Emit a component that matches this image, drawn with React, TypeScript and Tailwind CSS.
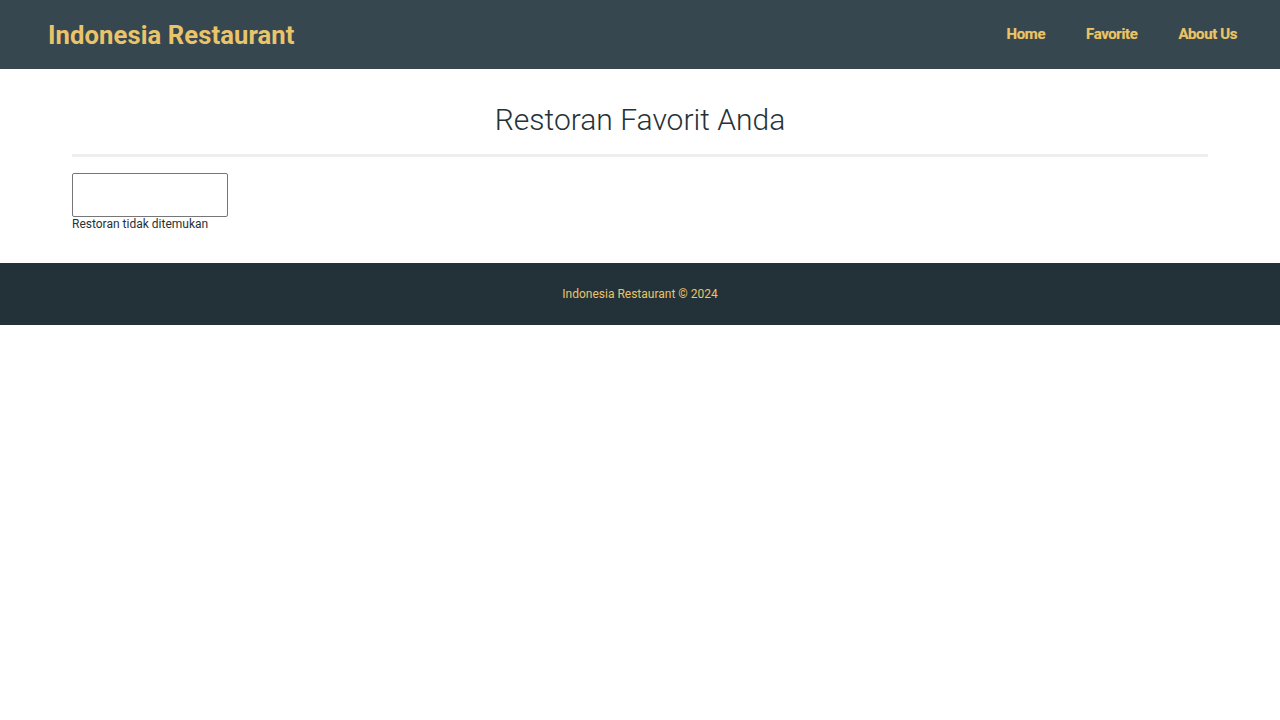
export default function App() {
  return (
    <div className="min-h-screen bg-white" style={{ fontFamily: "Roboto, 'Liberation Sans', sans-serif" }}>
      <header className="h-[69px] bg-[#37474f] flex items-center justify-between pl-12 pr-[43px]">
        <a className="text-[25.6px] font-bold text-[#e9c46a] tracking-[0.1px] pt-[2px]">Indonesia Restaurant</a>
        <nav className="flex items-center gap-[41px]">
          {["Home", "Favorite", "About Us"].map((t) => (
            <a key={t} className="text-[15px] font-bold text-[#e9c46a] tracking-[-0.4px] [text-shadow:0_0_1px_#8a7a40]">
              {t}
            </a>
          ))}
        </nav>
      </header>
      <main className="mx-[72px] pt-[33px] pb-[32px]">
        <h2 className="text-center text-[30px] font-light text-[#263238] leading-[36px]">Restoran Favorit Anda</h2>
        <div className="mt-[16px] h-[3px] bg-[#eeeeee]" />
        <div className="mt-[16px] w-[156px] h-[44px] border border-[#767676] rounded-[2px]" />
        <p className="text-[12px] text-[#263238] leading-[14px]">Restoran tidak ditemukan</p>
      </main>
      <footer className="h-[62px] bg-[#233238] flex items-center justify-center">
        <p className="text-[12px] text-[#e9c46a] leading-[14px]">Indonesia Restaurant © 2024</p>
      </footer>
    </div>
  );
}
